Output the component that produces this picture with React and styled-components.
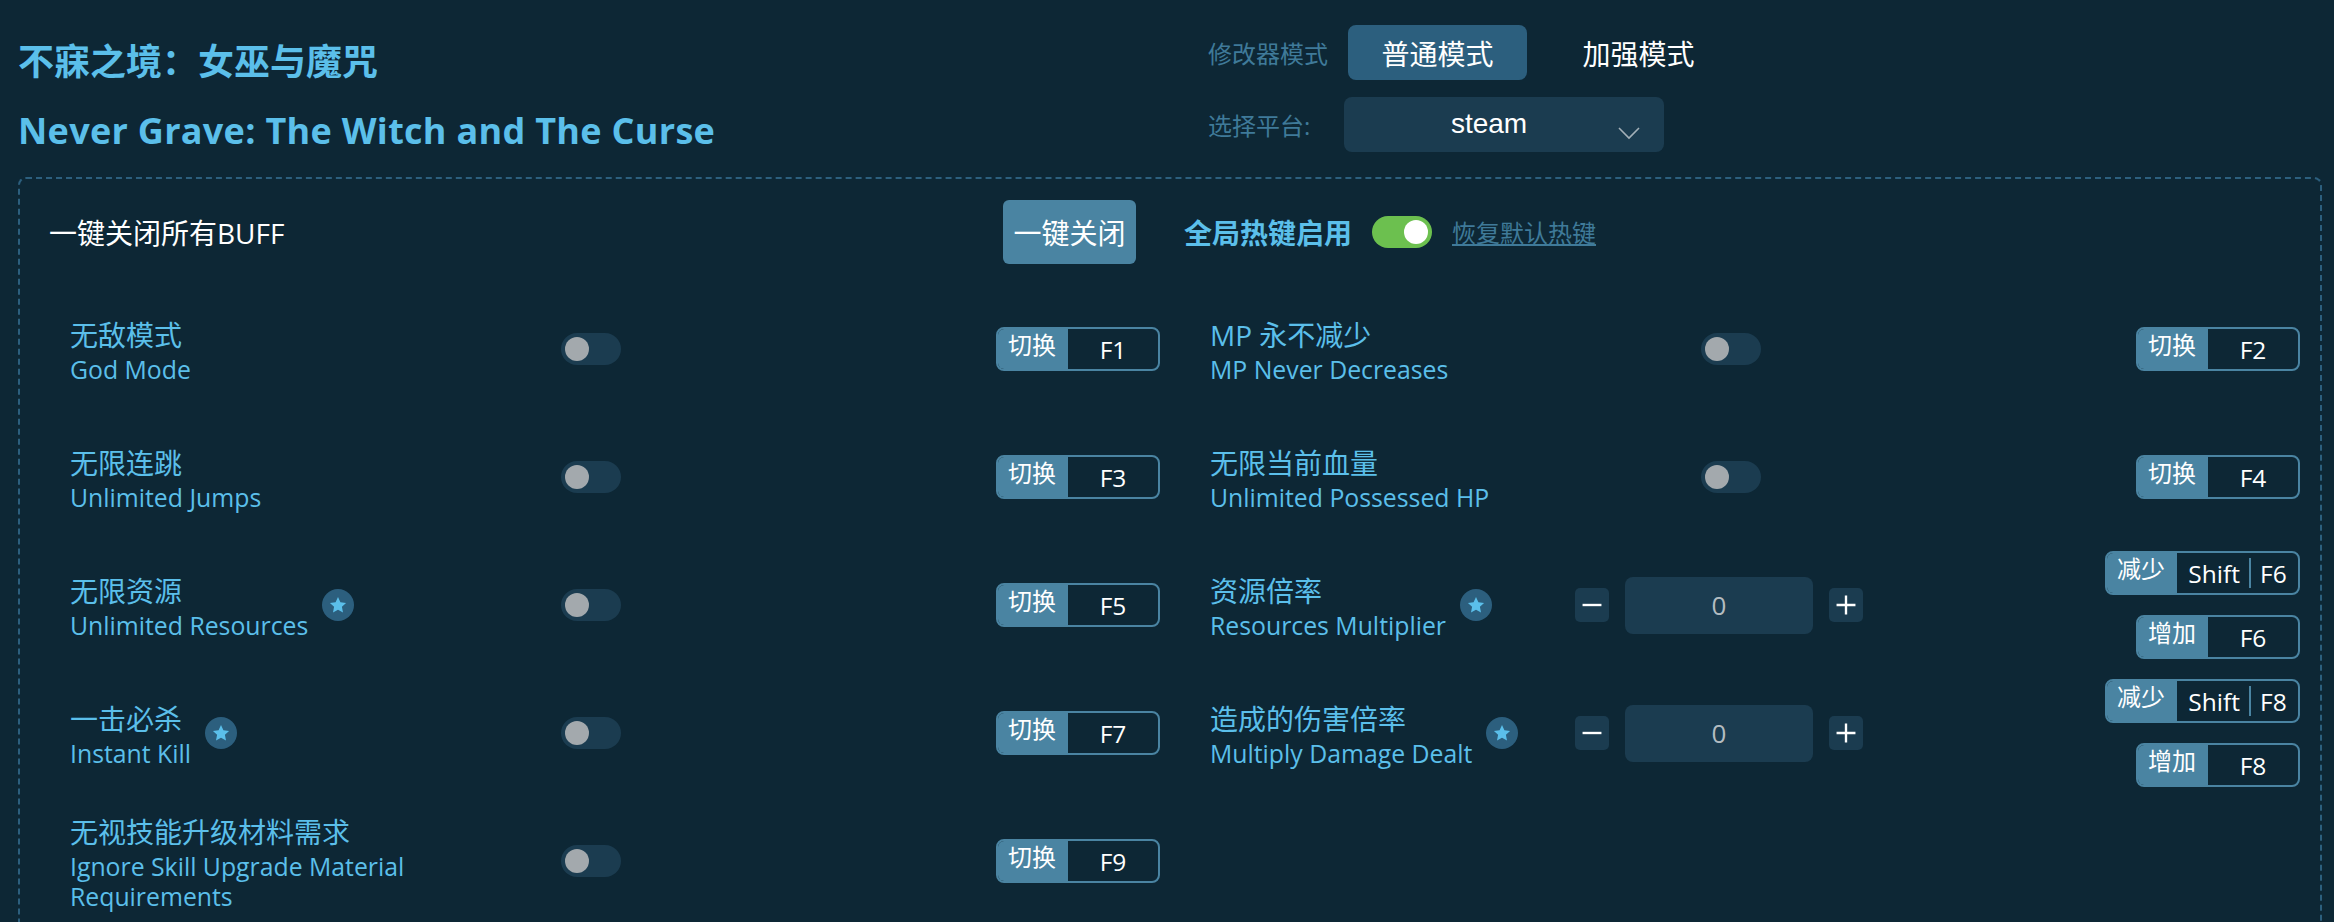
import React from "react";
import styled, { createGlobalStyle } from "styled-components";

const GlobalStyle = createGlobalStyle`
  html, body {
    margin: 0;
    height: 100%;
    overflow: hidden;
    background: #0d2735;
  }
  body {
    font-family: "Open Sans", "Noto Sans CJK SC", sans-serif;
  }
`;

const Page = styled.div`
  width: 2334px;
  height: 922px;
  padding: 0 12px 0 18px;
  box-sizing: border-box;
  overflow: hidden;
`;

const Header = styled.header`
  display: flex;
  height: 177px;
`;

const TitleBlock = styled.div`
  width: 1191px;
  padding-top: 38px;
  color: #5bbfea;
  font-weight: 700;
  font-size: 36px;
  line-height: 48px;
`;

const TitleLine = styled.div`
  margin-bottom: 21px;
  letter-spacing: ${(p) => (p.$latin ? "0.3px" : "0")};
`;

const ModeBlock = styled.div`
  display: flex;
  flex-direction: column;
  padding-top: 25px;
  gap: 17px;
`;

const ModeRow = styled.div`
  display: flex;
  align-items: center;
  height: 55px;
`;

const ModeLabel = styled.span`
  width: ${(p) => p.$w}px;
  margin-left: -1px;
  color: #3f7a99;
  font-size: 24px;
`;

const ModeButton = styled.button`
  width: 179px;
  height: 55px;
  margin-right: 22px;
  padding: 0;
  border: 0;
  border-radius: 8px;
  background: ${(p) => (p.$active ? "#2c5f7e" : "transparent")};
  color: #fff;
  font: inherit;
  font-size: 28px;
`;

const Select = styled.div`
  position: relative;
  width: 320px;
  height: 55px;
  box-sizing: border-box;
  padding-right: 30px;
  line-height: 54px;
  border-radius: 8px;
  background: #1b3c50;
  color: #fff;
  text-align: center;
  font-family: "Liberation Sans", sans-serif;
  font-size: 28px;
`;

const Chevron = styled.svg`
  position: absolute;
  right: 24px;
  top: 29px;
  width: 22px;
  height: 14px;
  fill: none;
  stroke: #a3b0b8;
  stroke-width: 1.6;
`;

const Panel = styled.main`
  height: 900px;
  box-sizing: border-box;
  border: 2px dashed #2c5f7e;
  border-radius: 8px;
  padding: 0 20px 0 29px;
`;

const TopRow = styled.div`
  display: flex;
  align-items: center;
  height: 106px;
`;

const TopLabel = styled.div`
  width: 954px;
  color: #fff;
  font-size: 28px;
`;

const CloseButton = styled.button`
  width: 133px;
  height: 64px;
  margin-right: 48px;
  padding: 0;
  border: 0;
  border-radius: 6px;
  background: #4a84a2;
  color: #fff;
  font: inherit;
  font-size: 28px;
`;

const HotkeyLabel = styled.span`
  margin-right: 20px;
  color: #5bbfea;
  font-size: 28px;
  font-weight: 700;
`;

const RestoreLink = styled.a`
  margin-left: 20px;
  margin-bottom: 2px;
  color: #3f7a99;
  font-size: 24px;
  text-decoration: underline;
`;

const Switch = styled.span`
  position: relative;
  display: block;
  flex: none;
  width: 60px;
  height: 32px;
  border-radius: 16px;
  background: ${(p) => (p.$on ? "#6cc04f" : "#1b3c50")};
  &::after {
    content: "";
    position: absolute;
    top: 4px;
    left: ${(p) => (p.$on ? "32px" : "4px")};
    width: 24px;
    height: 24px;
    border-radius: 50%;
    background: ${(p) => (p.$on ? "#fff" : "#a3a9ad")};
  }
`;

const Grid = styled.div`
  display: grid;
  grid-template-columns: 1090px 1090px;
  column-gap: 50px;
  grid-auto-rows: 128px;
  padding-left: 21px;
`;

const Cell = styled.div`
  display: flex;
  align-items: center;
`;

const NameArea = styled.div`
  display: flex;
  align-items: center;
  flex: none;
  width: ${(p) => (p.$number ? 365 : 491)}px;
`;

const Names = styled.div`
  max-width: 420px;
  color: #5bbfea;
`;

const NameZh = styled.div`
  padding-top: 2px;
  font-size: 28px;
  line-height: 38px;
`;

const NameEn = styled.div`
  font-size: 24.8px;
  line-height: 30px;
`;

const StarBadge = styled.span`
  display: flex;
  align-items: center;
  justify-content: center;
  flex: none;
  width: 32px;
  height: 32px;
  margin-left: 14px;
  border-radius: 50%;
  background: #2c5f7e;
  svg {
    width: 20px;
    height: 20px;
    fill: #5bbfea;
  }
`;

const Stepper = styled.div`
  display: flex;
  align-items: center;
  gap: 16px;
`;

const StepButton = styled.span`
  display: flex;
  align-items: center;
  justify-content: center;
  width: 34px;
  height: 34px;
  border-radius: 5px;
  background: #1b3c50;
  svg {
    width: 26px;
    height: 26px;
    stroke: #fff;
    stroke-width: 2;
  }
`;

const StepValue = styled.div`
  width: 188px;
  height: 57px;
  line-height: 56px;
  border-radius: 8px;
  background: #1b3c50;
  color: #b4bcc1;
  text-align: center;
  font-size: 26px;
`;

const Keys = styled.div`
  display: flex;
  flex-direction: column;
  align-items: flex-end;
  gap: 20px;
  margin-left: auto;
`;

const Chip = styled.div`
  display: flex;
  height: 44px;
  box-sizing: border-box;
  border: 2px solid #4a84a2;
  border-radius: 8px;
  overflow: hidden;
  color: #fff;
`;

const ChipLabel = styled.span`
  width: 68px;
  padding-right: 2px;
  background: #4a84a2;
  text-align: center;
  font-size: 24px;
  line-height: 32px;
`;

const ChipKeys = styled.span`
  display: flex;
  align-items: center;
  justify-content: center;
  width: ${(p) => (p.$wide ? 121 : 90)}px;
  font-size: 24.5px;
`;

const KeySplit = styled.i`
  width: 2px;
  height: 30px;
  margin: 0 9px;
  background: #4a84a2;
`;

const Star = () => (
  <StarBadge>
    <svg viewBox="0 0 24 24">
      <path d="M12 2.5l2.9 6.2 6.8.8-5 4.7 1.3 6.8-6-3.4-6 3.4 1.3-6.8-5-4.7 6.8-.8z" />
    </svg>
  </StarBadge>
);

const Key = ({ label, combo }) => (
  <Chip>
    <ChipLabel>{label}</ChipLabel>
    <ChipKeys $wide={combo.length > 1}>
      {combo.length > 1 ? (
        <>
          {combo[0]}
          <KeySplit />
          {combo[1]}
        </>
      ) : (
        combo[0]
      )}
    </ChipKeys>
  </Chip>
);

const rows = [
  { zh: "无敌模式", en: "God Mode", keys: "F1" },
  { zh: "MP 永不减少", en: "MP Never Decreases", keys: "F2" },
  { zh: "无限连跳", en: "Unlimited Jumps", keys: "F3" },
  { zh: "无限当前血量", en: "Unlimited Possessed HP", keys: "F4" },
  { zh: "无限资源", en: "Unlimited Resources", keys: "F5", star: true },
  { zh: "资源倍率", en: "Resources Multiplier", keys: "F6", star: true, number: true },
  { zh: "一击必杀", en: "Instant Kill", keys: "F7", star: true },
  { zh: "造成的伤害倍率", en: "Multiply Damage Dealt", keys: "F8", star: true, number: true },
  { zh: "无视技能升级材料需求", en: "Ignore Skill Upgrade Material Requirements", keys: "F9" },
];

const Row = ({ zh, en, keys, star, number }) => (
  <Cell>
    <NameArea $number={number}>
      <Names>
        <NameZh>{zh}</NameZh>
        <NameEn>{en}</NameEn>
      </Names>
      {star && <Star />}
    </NameArea>
    {number ? (
      <Stepper>
        <StepButton>
          <svg viewBox="0 0 22 22"><path d="M3 11h16" /></svg>
        </StepButton>
        <StepValue>0</StepValue>
        <StepButton>
          <svg viewBox="0 0 22 22"><path d="M3 11h16M11 3v16" /></svg>
        </StepButton>
      </Stepper>
    ) : (
      <Switch />
    )}
    <Keys>
      {number ? (
        <>
          <Key label="减少" combo={["Shift", keys]} />
          <Key label="增加" combo={[keys]} />
        </>
      ) : (
        <Key label="切换" combo={[keys]} />
      )}
    </Keys>
  </Cell>
);

export default function App() {
  return (
    <Page>
      <GlobalStyle />
      <Header>
        <TitleBlock>
          <TitleLine>不寐之境：女巫与魔咒</TitleLine>
          <TitleLine $latin>Never Grave: The Witch and The Curse</TitleLine>
        </TitleBlock>
        <ModeBlock>
          <ModeRow>
            <ModeLabel $w={140}>修改器模式</ModeLabel>
            <ModeButton $active>普通模式</ModeButton>
            <ModeButton>加强模式</ModeButton>
          </ModeRow>
          <ModeRow>
            <ModeLabel $w={136}>选择平台:</ModeLabel>
            <Select>
              steam
              <Chevron viewBox="0 0 22 14"><path d="M1 2l10 10L21 2" /></Chevron>
            </Select>
          </ModeRow>
        </ModeBlock>
      </Header>
      <Panel>
        <TopRow>
          <TopLabel>一键关闭所有BUFF</TopLabel>
          <CloseButton>一键关闭</CloseButton>
          <HotkeyLabel>全局热键启用</HotkeyLabel>
          <Switch $on />
          <RestoreLink>恢复默认热键</RestoreLink>
        </TopRow>
        <Grid>
          {rows.map((r) => (
            <Row key={r.keys} {...r} />
          ))}
        </Grid>
      </Panel>
    </Page>
  );
}
